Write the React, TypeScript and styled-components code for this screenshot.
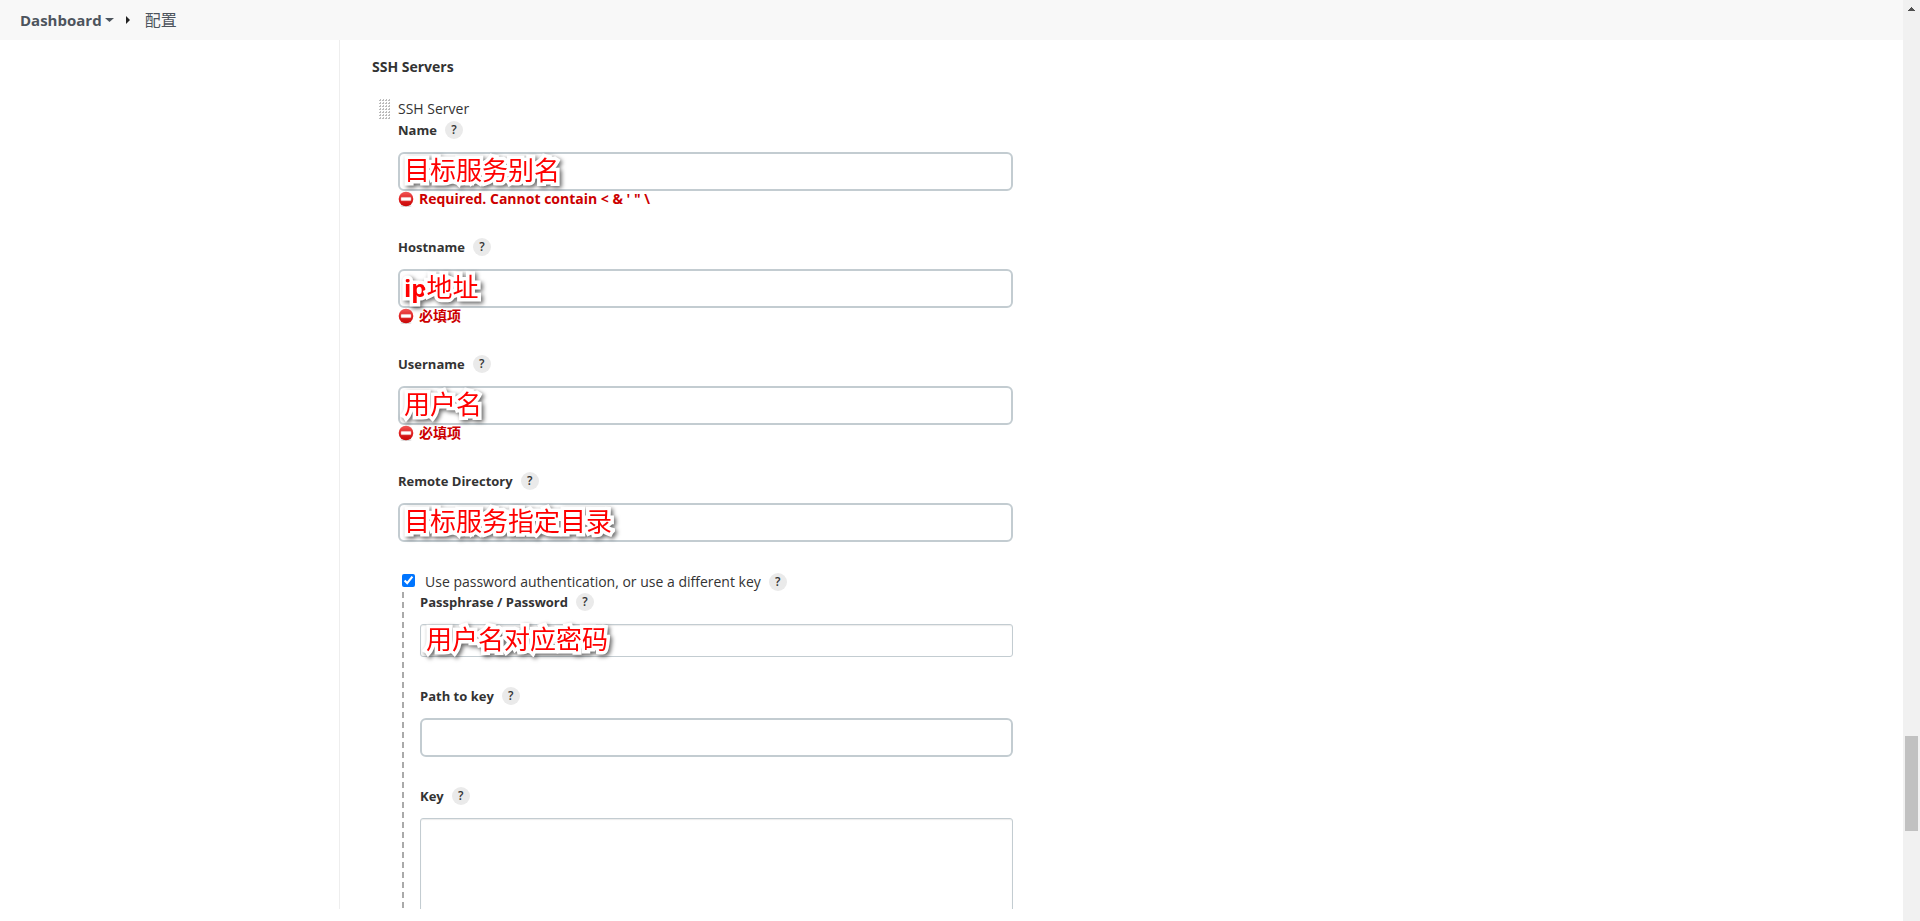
import React, { useId } from "react";
import styled, { createGlobalStyle } from "styled-components";

const GlobalStyle = createGlobalStyle`
  *, *::before, *::after { box-sizing: border-box; }
  body {
    margin: 0;
    background: #fff;
    color: #333;
    font-family: "Open Sans", "Noto Sans CJK SC", sans-serif;
    font-size: 14px;
    line-height: 18px;
  }
`;

const Window = styled.div`
  display: grid;
  grid-template-columns: minmax(0, 1fr) 17px;
  height: 100vh;
  overflow: hidden;
`;

const Page = styled.div`
  display: flex;
  flex-direction: column;
  min-height: 0;
`;

const Breadcrumbs = styled.nav`
  flex: none;
  display: flex;
  align-items: center;
  height: 40px;
  padding-left: 20px;
  background: #f8f8f8;
`;

const Crumb = styled.a<{ $strong?: boolean }>`
  color: #4d545d;
  font-size: ${(p) => (p.$strong ? 15 : 16)}px;
  line-height: 24px;
  font-weight: ${(p) => (p.$strong ? 700 : 400)};
  text-decoration: none;
`;

const MenuButton = styled.button`
  display: flex;
  padding: 0;
  margin: 0 12px 0 3px;
  border: 0;
  background: none;
`;

const Separator = styled.svg`
  margin-right: 15px;
`;

const Body = styled.div`
  flex: 1;
  display: flex;
  min-height: 0;
  margin-bottom: 12px;
`;

const SidePanel = styled.aside`
  flex: none;
  width: 340px;
  border-right: 1px solid #eee;
`;

const Main = styled.main`
  flex: 1;
  min-width: 0;
  overflow: hidden;
  padding: 18px 32px 0;
`;

const SectionTitle = styled.h2`
  margin: 0 0 24px;
  font-size: 14px;
  line-height: 18px;
  font-weight: 700;
`;

const Server = styled.div`
  display: flex;
  gap: 8px;
  padding-left: 7px;
`;

const Handle = styled.svg`
  flex: none;
  margin-top: -1px;
`;

const ServerForm = styled.form`
  width: 615px;
`;

const ServerTitle = styled.div`
  padding-bottom: 3px;
`;

const Field = styled.div`
  margin-bottom: 30px;
`;

const LabelRow = styled.div`
  display: flex;
  align-items: center;
  gap: 8px;
  height: 18px;
`;

const Label = styled.label<{ $plain?: boolean }>`
  font-size: ${(p) => (p.$plain ? 14 : 13)}px;
  font-weight: ${(p) => (p.$plain ? 400 : 700)};
`;

const Help = styled.button`
  width: 18px;
  height: 18px;
  padding: 0;
  border: 0;
  border-radius: 50%;
  background: #eaeaea;
  color: #333;
  font: 600 12px/18px "Open Sans", sans-serif;
  text-align: center;
`;

const Control = styled.div`
  position: relative;
  display: flex;
  align-items: center;
  margin-top: 13px;
`;

const TextInput = styled.input<{ $thin?: boolean }>`
  width: 100%;
  height: ${(p) => (p.$thin ? 33 : 39)}px;
  padding: 0 8px;
  border: ${(p) => (p.$thin ? 1 : 2)}px solid #c3ccd1;
  border-radius: ${(p) => (p.$thin ? 3 : 6)}px;
  background: #fff;
  box-shadow: ${(p) => (p.$thin ? "inset 0 1px 1px rgba(0, 0, 0, 0.08)" : "none")};
  font: inherit;
  outline: none;
`;

const KeyArea = styled.textarea`
  width: 100%;
  height: 160px;
  border: 1px solid #c3ccd1;
  border-radius: 3px;
  box-shadow: inset 0 1px 1px rgba(0, 0, 0, 0.08);
  resize: none;
  outline: none;
`;

const Note = styled.span`
  position: absolute;
  left: 6px;
  padding-bottom: 3px;
  color: #f00;
  font-size: 26px;
  line-height: 30px;
  white-space: nowrap;
  pointer-events: none;
  -webkit-text-stroke: 7px #fff;
  stroke-linejoin: round;
  paint-order: stroke fill;
  filter: drop-shadow(2px 2px 2px rgba(0, 0, 0, 0.6));
`;

const NoteLatin = styled.b`
  font-size: 24px;
`;

const ErrorLine = styled.div`
  display: flex;
  align-items: center;
  gap: 5px;
  height: 17px;
  padding-bottom: 2px;
  color: #c00;
  font-weight: 700;
`;

const ErrorIcon = styled.svg`
  flex: none;
`;

const CheckRow = styled(LabelRow)`
  height: 20px;
  padding-left: 4px;
`;

const Check = styled.input`
  width: 13px;
  height: 13px;
  margin: 0 2px 4px 0;
  accent-color: #0075ff;
`;

const Nested = styled.div`
  margin-left: 4px;
  padding: 1px 0 0 18px;
  background: repeating-linear-gradient(#aaa 0 6px, transparent 6px 10px) 0 0 / 2px 100% no-repeat;
`;

const Scrollbar = styled.div`
  display: flex;
  flex-direction: column;
  align-items: center;
  background: #f1f1f1;
`;

const ScrollArrow = styled.svg`
  flex: none;
  margin-top: 7px;
`;

const ScrollTrack = styled.div`
  flex: 1;
  display: grid;
  grid-template-rows: 725fr 95fr 90fr;
`;

const ScrollThumb = styled.div`
  grid-row: 2;
  width: 13px;
  background: #c1c1c1;
`;

type FieldProps = {
  label: string;
  type?: string;
  thin?: boolean;
  note?: React.ReactNode;
  error?: React.ReactNode;
  multiline?: boolean;
};

function HelpButton({ topic }: { topic: string }) {
  return (
    <Help type="button" aria-label={`Help for feature: ${topic}`}>
      ?
    </Help>
  );
}

function FormField({ label, type = "text", thin, note, error, multiline }: FieldProps) {
  const id = useId();
  return (
    <Field>
      <LabelRow>
        <Label htmlFor={id}>{label}</Label>
        <HelpButton topic={label} />
      </LabelRow>
      <Control>
        {multiline ? <KeyArea id={id} /> : <TextInput id={id} type={type} $thin={thin} />}
        {note && <Note>{note}</Note>}
      </Control>
      {error && (
        <ErrorLine>
          <ErrorIcon width="16" height="16" viewBox="0 0 16 16" aria-hidden="true">
            <defs>
              <linearGradient id={`${id}-red`} x1="0" y1="0" x2="0" y2="1">
                <stop offset="0" stopColor="#f25a5a" />
                <stop offset="0.5" stopColor="#e02020" />
                <stop offset="1" stopColor="#c80808" />
              </linearGradient>
            </defs>
            <ellipse cx="8" cy="15" rx="5.5" ry="1" fill="#000" opacity="0.15" />
            <circle cx="8" cy="8" r="7.300" fill={`url(#${id}-red)`} />
            <rect x="3" y="6.300" width="10" height="3.400" rx="0.6" fill="#fff" stroke="#e9a0a0" strokeWidth="0.5" />
          </ErrorIcon>
          <span>{error}</span>
        </ErrorLine>
      )}
    </Field>
  );
}

const dotRows = [0, 3, 6, 9, 12, 15, 18];
const dotColumns = [0, 3, 6, 9];

export default function App() {
  return (
    <>
      <GlobalStyle />
      <Window>
        <Page>
          <Breadcrumbs>
            <Crumb href="#dashboard" $strong>Dashboard</Crumb>
            <MenuButton type="button" aria-label="Dashboard menu">
              <svg width="9" height="4" viewBox="0 0 9 4"><path d="M0 0h9L4.500 4z" fill="#4d545d" /></svg>
            </MenuButton>
            <Separator width="4" height="8" viewBox="0 0 4 8"><path d="M0 0l4 4-4 4z" fill="#222" /></Separator>
            <Crumb href="#configure">配置</Crumb>
          </Breadcrumbs>
          <Body>
            <SidePanel />
            <Main>
              <SectionTitle>SSH Servers</SectionTitle>
              <Server>
                <Handle width="11" height="20" viewBox="0 0 11 20">
                  {dotRows.map((y) =>
                    dotColumns.map((x) => (
                      <path key={`${x}-${y}`} d={`M${x} ${y + 1}h1v-1h1v2h-2z`} fill="#bbb" />
                    ))
                  )}
                </Handle>
                <ServerForm>
                  <ServerTitle>SSH Server</ServerTitle>
                  <FormField label="Name" note="目标服务别名" error={"Required. Cannot contain < & ' \" \\"} />
                  <FormField label="Hostname" note={<><NoteLatin>ip</NoteLatin>地址</>} error="必填项" />
                  <FormField label="Username" note="用户名" error="必填项" />
                  <FormField label="Remote Directory" note="目标服务指定目录" />
                  <CheckRow>
                    <Check id="use-password" type="checkbox" defaultChecked />
                    <Label htmlFor="use-password" $plain>Use password authentication, or use a different key</Label>
                    <HelpButton topic="Use password authentication" />
                  </CheckRow>
                  <Nested>
                    <FormField label="Passphrase / Password" type="password" thin note="用户名对应密码" />
                    <FormField label="Path to key" />
                    <FormField label="Key" multiline />
                  </Nested>
                </ServerForm>
              </Server>
            </Main>
          </Body>
        </Page>
        <Scrollbar aria-hidden="true">
          <ScrollArrow width="7" height="4" viewBox="0 0 7 4"><path d="M3 0h1v1h1v1h1v1h1v1H0V3h1V2h1V1h1z" fill="#505050" /></ScrollArrow>
          <ScrollTrack>
            <ScrollThumb />
          </ScrollTrack>
        </Scrollbar>
      </Window>
    </>
  );
}
